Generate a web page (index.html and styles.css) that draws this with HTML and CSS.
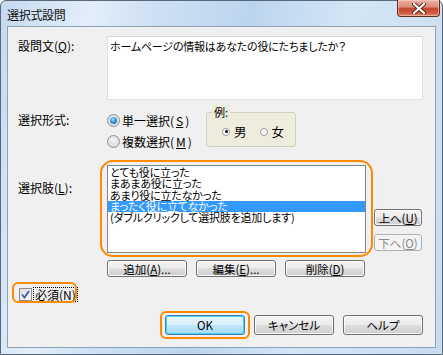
FILE: index.html
```html
<!DOCTYPE html>
<html lang="ja">
<head>
  <meta charset="UTF-8" />
  <title>選択式設問</title>
  <link rel="stylesheet" href="styles.css">
</head>
<body>

  <div class="window">
    <div class="titlebar">
      <span class="title">選択式設問</span>
      <div class="close-btn">
        <svg width="14" height="11" viewBox="0 0 14 11">
          <path d="M2 1 L12 10 M12 1 L2 10" stroke="#5a1f16" stroke-width="4" stroke-linecap="round" />
          <path d="M2 1 L12 10 M12 1 L2 10" stroke="#ffffff" stroke-width="2.2" stroke-linecap="round" />
        </svg>
      </div>
    </div>

    <div class="client">
      <!-- 設問文 -->
      <div class="row row-question">
        <div class="label">設問文(<u>Q</u>):</div>
        <div class="textbox">ホームページの情報はあなたの役にたちましたか？</div>
      </div>

      <!-- 選択形式 -->
      <div class="row row-type">
        <div class="label label-type">選択形式:</div>
        <div class="radio-col">
          <div class="radio-item"><span class="radio checked"></span>単一選択(<u>S</u>)</div>
          <div class="radio-item"><span class="radio"></span>複数選択(<u>M</u>)</div>
        </div>
        <div class="groupbox">
          <span class="legend">例:</span>
          <div class="mini-radio-item"><span class="mini-radio checked"></span>男</div>
          <div class="mini-radio-item"><span class="mini-radio"></span>女</div>
        </div>
      </div>

      <!-- 選択肢 -->
      <div class="row row-choices">
        <div class="label label-choices">選択肢(<u>L</u>):</div>
        <div class="listbox">
          <div class="list-item">とても役に立った</div>
          <div class="list-item">まあまあ役に立った</div>
          <div class="list-item">あまり役に立たなかった</div>
          <div class="list-item selected">まったく役に立てなかった</div>
          <div class="list-item">(ダブルクリックして選択肢を追加します)</div>
        </div>
        <div class="side-buttons">
          <div class="btn btn-small">上へ(<u>U</u>)</div>
          <div class="btn btn-small disabled">下へ(<u>O</u>)</div>
        </div>
        <div class="highlight hl-list"></div>
      </div>

      <div class="row row-edit">
        <div class="btn btn-edit">追加(<u>A</u>)...</div>
        <div class="btn btn-edit">編集(<u>E</u>)...</div>
        <div class="btn btn-edit">削除(<u>D</u>)</div>
      </div>

      <!-- 必須 -->
      <div class="row row-check">
        <span class="checkbox">
          <svg width="9" height="9" viewBox="0 0 9 9">
            <path d="M1 4.5 L3.5 7.5 L8 1" fill="none" stroke="#3b59b6" stroke-width="1.8" />
          </svg>
        </span>
        <span class="focus-text">必須(<u>N</u>)</span>
        <div class="highlight hl-check"></div>
      </div>

      <div class="footer">
        <div class="ok-wrap">
          <div class="btn btn-foot btn-default">OK</div>
          <div class="highlight hl-ok"></div>
        </div>
        <div class="btn btn-foot">キャンセル</div>
        <div class="btn btn-foot">ヘルプ</div>
      </div>
    </div>
  </div>

</body>
</html>
```

FILE: styles.css
```css
body {
  margin: 0;
  font-family: "Noto Sans CJK JP", sans-serif;
  font-size: 12px;
  font-feature-settings: "palt";
  color: #000;
}
u {
  text-decoration: underline;
  text-underline-offset: 1px;
}
.window {
  width: 443px;
  height: 355px;
  box-sizing: border-box;
  border: 1px solid #56687a;
  border-radius: 6px 6px 0 0;
  background: linear-gradient(100deg, #c4daf0 0%, #e3eef9 18%, #cfe1f3 30%, #bcd5ee 50%, #d4e5f5 70%, #c8dcf1 100%);
  display: flex;
  flex-direction: column;
}
.titlebar {
  height: 25px;
  display: flex;
  align-items: flex-start;
  justify-content: space-between;
}
.title {
  margin: 5px 0 0 6px;
  font-size: 12px;
  color: #111;
  letter-spacing: -0.3px;
}
.close-btn {
  width: 43px;
  height: 17px;
  margin-right: 2px;
  margin-top: -1px;
  box-sizing: border-box;
  border: 1px solid #6b2a20;
  border-top: none;
  border-radius: 0 0 4px 4px;
  background: linear-gradient(#eab0a2 0%, #dc8c78 45%, #c4462e 50%, #cf5a40 80%, #e0886c 100%);
  box-shadow: inset 0 0 0 1px rgba(255, 220, 210, 0.5);
  display: flex;
  align-items: center;
  justify-content: center;
}
.client {
  flex: 1;
  margin: 0 6px 6px 6px;
  border: 1px solid #8fa3b8;
  background: #f0f0f0;
  padding: 9px 12px 12px 10px;
  display: flex;
  flex-direction: column;
}
.row {
  display: flex;
  position: relative;
}
.label {
  width: 89px;
  flex-shrink: 0;
  line-height: 20px;
}
.textbox {
  width: 316px;
  height: 64px;
  box-sizing: border-box;
  background: #fff;
  border: 1px solid #dde2e8;
  border-top-color: #cfd5dc;
  padding: 1px 2px 0;
  font-size: 11px;
  line-height: 16px;
  letter-spacing: -0.2px;
}
.row-type {
  margin-top: 10px;
}
.radio-col {
  width: 99px;
}
.radio-item {
  height: 21px;
  display: flex;
  align-items: center;
  gap: 2px;
}
.radio {
  width: 13px;
  height: 13px;
  box-sizing: border-box;
  border-radius: 50%;
  border: 1px solid #8f8f8f;
  background: radial-gradient(circle at 50% 40%, #f4f4f4 0%, #dcdcdc 70%, #d0d0d0 100%);
  display: inline-flex;
  align-items: center;
  justify-content: center;
}
.radio.checked::after {
  content: "";
  width: 7px;
  height: 7px;
  border-radius: 50%;
  background: radial-gradient(circle at 40% 35%, #a8e4ff 0%, #3aa0e0 40%, #1c5aa8 100%);
}
.groupbox {
  position: relative;
  margin-top: 2px;
  width: 90px;
  height: 35px;
  box-sizing: border-box;
  border: 1px solid #d0d0bf;
  border-radius: 3px;
  background: #eeecdd;
  display: flex;
  align-items: center;
  padding: 4px 0 0 15px;
  gap: 13px;
  font-size: 12.5px;
}
.legend {
  position: absolute;
  top: -8px;
  left: 5px;
  padding: 0 2px;
  background: #eeecdd;
  font-size: 11px;
  line-height: 14px;
}
.mini-radio-item {
  display: flex;
  align-items: center;
  gap: 4px;
}
.mini-radio {
  width: 8px;
  height: 8px;
  box-sizing: border-box;
  border-radius: 50%;
  border: 1px solid #9a9a9a;
  background: #fff;
  display: inline-flex;
  align-items: center;
  justify-content: center;
}
.mini-radio.checked::after {
  content: "";
  width: 3px;
  height: 3px;
  border-radius: 50%;
  background: #000;
}
.row-choices {
  margin-top: 13px;
}
.label-choices {
  margin-top: 13px;
}
.listbox {
  width: 259px;
  height: 88px;
  box-sizing: border-box;
  border: 1px solid #828790;
  background: #fff;
  padding-top: 1px;
  font-size: 11px;
  letter-spacing: -0.2px;
}
.list-item {
  line-height: 11.25px;
  height: 11.25px;
  padding-left: 2px;
  white-space: nowrap;
}
.list-item.selected {
  background: #3399ff;
  color: #fff;
}
.side-buttons {
  margin-left: 8px;
  margin-bottom: 2px;
  display: flex;
  flex-direction: column;
  justify-content: flex-end;
  gap: 8px;
}
.btn {
  box-sizing: border-box;
  border: 1px solid #707070;
  border-radius: 3px;
  background: linear-gradient(#f4f4f4 0%, #ebebeb 48%, #dddddd 52%, #cfcfcf 100%);
  box-shadow: inset 0 0 0 1px rgba(255, 255, 255, 0.8);
  display: flex;
  align-items: center;
  justify-content: center;
  font-size: 11.5px;
  color: #000;
}
.btn-small {
  width: 48px;
  height: 17px;
}
.btn.disabled {
  border-color: #adb2b5;
  background: #f4f4f4;
  color: #8a8a8a;
  box-shadow: none;
}
.row-edit {
  margin-top: 7px;
  padding-left: 89px;
  gap: 9px;
}
.btn-edit {
  width: 80px;
  height: 17px;
}
.row-check {
  margin-top: 10px;
  align-items: center;
  padding-left: 1px;
  height: 14px;
}
.checkbox {
  width: 13px;
  height: 13px;
  box-sizing: border-box;
  border: 1px solid #8e8f8f;
  background: linear-gradient(135deg, #dcdcdc, #fbfbfb);
  display: inline-flex;
  align-items: center;
  justify-content: center;
}
.focus-text {
  margin-left: 2px;
  outline: 1px dotted #000;
  line-height: 13px;
  padding: 0 1px;
}
.footer {
  margin-top: auto;
  display: flex;
  justify-content: flex-end;
  gap: 9px;
}
.ok-wrap {
  position: relative;
}
.btn-foot {
  width: 80px;
  height: 20px;
}
.btn-default {
  border-color: #3c7fb1;
  background: linear-gradient(#eaf6fd 0%, #d9f0fc 48%, #bee6fd 52%, #a7d9f5 100%);
  box-shadow: inset 0 0 0 1px #48d0f4;
}
/* 注釈の枠 */
.highlight {
  position: absolute;
  border: 2px solid #ff8a00;
  pointer-events: none;
}
.hl-list {
  left: 82px;
  top: -5px;
  width: 269px;
  height: 93px;
  border-radius: 13px;
}
.hl-check {
  left: -6px;
  top: -5px;
  width: 61px;
  height: 17px;
  border-radius: 6px;
}
.hl-ok {
  left: -5px;
  top: -4px;
  width: 86px;
  height: 24px;
  border-radius: 6px;
}
```
